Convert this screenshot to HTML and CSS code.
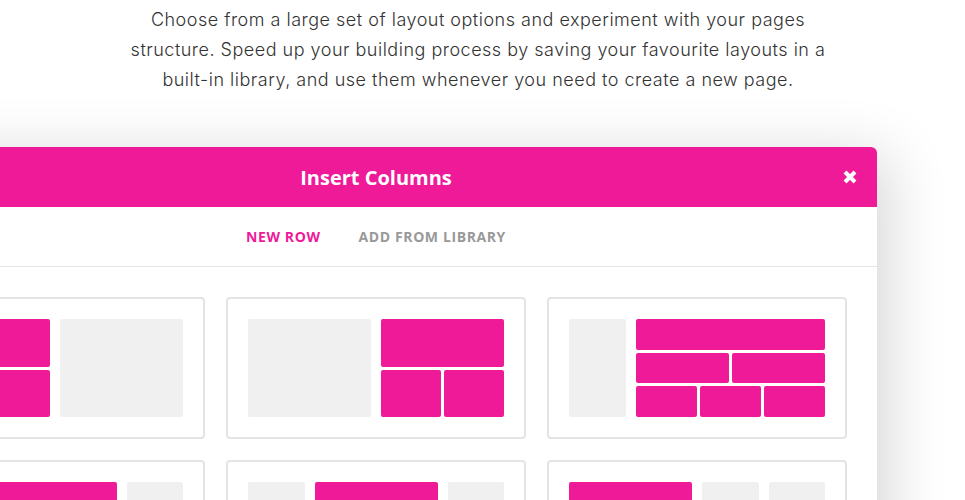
FILE: index.html
```html
<!DOCTYPE html>
<html lang="en">
<head>
    <meta charset="UTF-8">
    <meta name="viewport" content="width=device-width, initial-scale=1.0">
    <title>Insert Columns</title>
    <link rel="stylesheet" href="styles.css">
</head>
<body>

    <section class="feature">
        <p class="feature-text">Choose from a large set of layout options and experiment with your pages structure. Speed up your building process by saving your favourite layouts in a built-in library, and use them whenever you need to create a new page.</p>

        <div class="modal">
            <div class="modal-header">
                <h2 class="modal-title">Insert Columns</h2>
                <button class="modal-close" type="button" aria-label="Close">
                    <svg width="14" height="14" viewBox="0 0 14 14"><path d="M2 2 L12 12 M12 2 L2 12" stroke="#fff" stroke-width="4"/></svg>
                </button>
            </div>

            <nav class="modal-tabs">
                <a class="tab active" href="#">New row</a>
                <a class="tab" href="#">Add from library</a>
            </nav>

            <div class="layout-grid">
                <div class="layout-card">
                    <div class="layout">
                        <div class="stack span-2">
                            <div class="stack-row"><span class="blk pink"></span></div>
                            <div class="stack-row"><span class="blk pink"></span><span class="blk pink"></span></div>
                        </div>
                        <span class="blk gray span-2"></span>
                    </div>
                </div>
                <div class="layout-card">
                    <div class="layout">
                        <span class="blk gray span-2"></span>
                        <div class="stack span-2">
                            <div class="stack-row"><span class="blk pink"></span></div>
                            <div class="stack-row"><span class="blk pink"></span><span class="blk pink"></span></div>
                        </div>
                    </div>
                </div>
                <div class="layout-card">
                    <div class="layout">
                        <span class="blk gray"></span>
                        <div class="stack span-3">
                            <div class="stack-row"><span class="blk pink"></span></div>
                            <div class="stack-row"><span class="blk pink"></span><span class="blk pink"></span></div>
                            <div class="stack-row"><span class="blk pink"></span><span class="blk pink"></span><span class="blk pink"></span></div>
                        </div>
                    </div>
                </div>

                <div class="layout-card">
                    <div class="layout">
                        <span class="blk pink span-3"></span>
                        <span class="blk gray"></span>
                    </div>
                </div>
                <div class="layout-card">
                    <div class="layout">
                        <span class="blk gray"></span>
                        <span class="blk pink span-2"></span>
                        <span class="blk gray"></span>
                    </div>
                </div>
                <div class="layout-card">
                    <div class="layout">
                        <span class="blk pink span-2"></span>
                        <span class="blk gray"></span>
                        <span class="blk gray"></span>
                    </div>
                </div>
            </div>
        </div>
    </section>

</body>
</html>
```

FILE: styles.css
```css
body { margin: 0; background: #fff; overflow: hidden; }

.feature { padding-top: 5px; }
.feature-text { width: 710px; margin: 0 auto; padding-right: 9px; text-align: center; font-family: Inter, "Open Sans", sans-serif; font-weight: 300; font-size: 18px; letter-spacing: 0.5px; line-height: 30px; color: #333; }

.modal { width: 1002px; margin: 52px 0 0 -125px; background: #fff; border-radius: 0 6px 0 0; box-shadow: 12px 8px 60px rgba(0, 0, 0, 0.16); font-family: "Open Sans", sans-serif; }

.modal-header { position: relative; height: 60px; display: flex; align-items: center; justify-content: center; background: #ef1a97; border-radius: 0 6px 0 0; }
.modal-title { margin: 0; color: #fff; font-size: 20px; font-weight: 700; }
.modal-close { position: absolute; right: 20px; top: 23px; width: 14px; height: 14px; padding: 0; border: 0; background: none; display: flex; }

.modal-tabs { height: 59px; display: flex; align-items: center; justify-content: center; gap: 38px; border-bottom: 1px solid #e4e4e4; }
.tab { font-size: 14px; font-weight: 700; letter-spacing: 0.6px; text-transform: uppercase; text-decoration: none; color: #999; }
.tab.active { color: #ef1a97; }

.layout-grid { display: grid; grid-template-columns: repeat(3, 300px); gap: 21px; padding: 30px; }
.layout-card { border: 2px solid #e4e4e4; border-radius: 4px; padding: 20px; }

.layout { display: grid; grid-template-columns: repeat(4, 1fr); gap: 10px; height: 98px; }
.blk { display: block; border-radius: 2px; }
.blk.gray { background: #f0f0f0; }
.blk.pink { background: #ef1a97; }
.span-2 { grid-column: span 2; }
.span-3 { grid-column: span 3; }

.stack { display: flex; flex-direction: column; gap: 3px; }
.stack-row { flex: 1; display: flex; gap: 3px; }
.stack-row .blk { flex: 1; }
```
